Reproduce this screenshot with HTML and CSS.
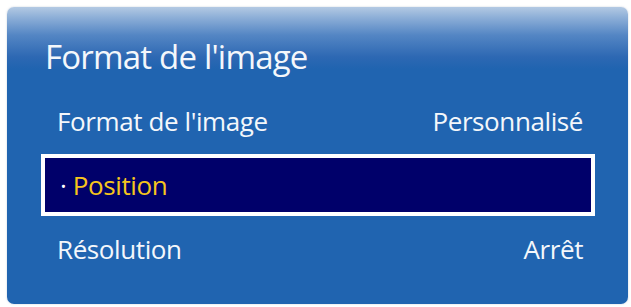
FILE: index.html
```html
<!DOCTYPE html>
<html lang="fr">
<head>
<meta charset="utf-8">
<title>Format de l'image</title>
<link rel="stylesheet" href="styles.css">
</head>
<body>
<div class="panel">
  <div class="title">Format de l'image</div>
  <div class="list">
    <div class="row">
      <span class="label">Format de l'image</span>
      <span class="value">Personnalisé</span>
    </div>
    <div class="row row-selected">
      <span class="label"><span class="dot">·</span> Position</span>
    </div>
    <div class="row">
      <span class="label">Résolution</span>
      <span class="value">Arrêt</span>
    </div>
  </div>
</div>
</body>
</html>
```
FILE: styles.css
```css
html, body {
  margin: 0;
  padding: 0;
  background: #ffffff;
}

body {
  width: 631px;
  height: 307px;
  overflow: hidden;
  font-family: "Open Sans", "Noto Sans", sans-serif;
}

.panel {
  margin: 7px 3px 0 7px;
  height: 297px;
  border-radius: 7px;
  background: linear-gradient(to bottom, #b3c9e3 0px, #8fb0d8 10px, #5486c4 28px, #2d68b3 50px, #2064b0 62px, #2064b0 100%);
  box-shadow: 0 0 2px rgba(80, 110, 150, 0.35);
  display: flex;
  flex-direction: column;
  color: #f4f7fb;
}

.title {
  height: 83px;
  padding-left: 38px;
  padding-top: 16px;
  display: flex;
  align-items: center;
  font-size: 33px;
  letter-spacing: -0.8px;
  line-height: 1;
  box-sizing: border-box;
}

.list {
  margin: 0 33px 0 34px;
  display: flex;
  flex-direction: column;
  gap: 2px;
}

.row {
  height: 62px;
  box-sizing: border-box;
  padding: 0 12px 0 16px;
  display: flex;
  align-items: center;
  justify-content: space-between;
  font-size: 26px;
  letter-spacing: -0.4px;
  line-height: 1;
}

.row-selected {
  border: 4px solid #ffffff;
  background: #00006a;
  color: #f6c51c;
  padding-left: 15px;
}

.dot {
  color: #ffffff;
}
```
